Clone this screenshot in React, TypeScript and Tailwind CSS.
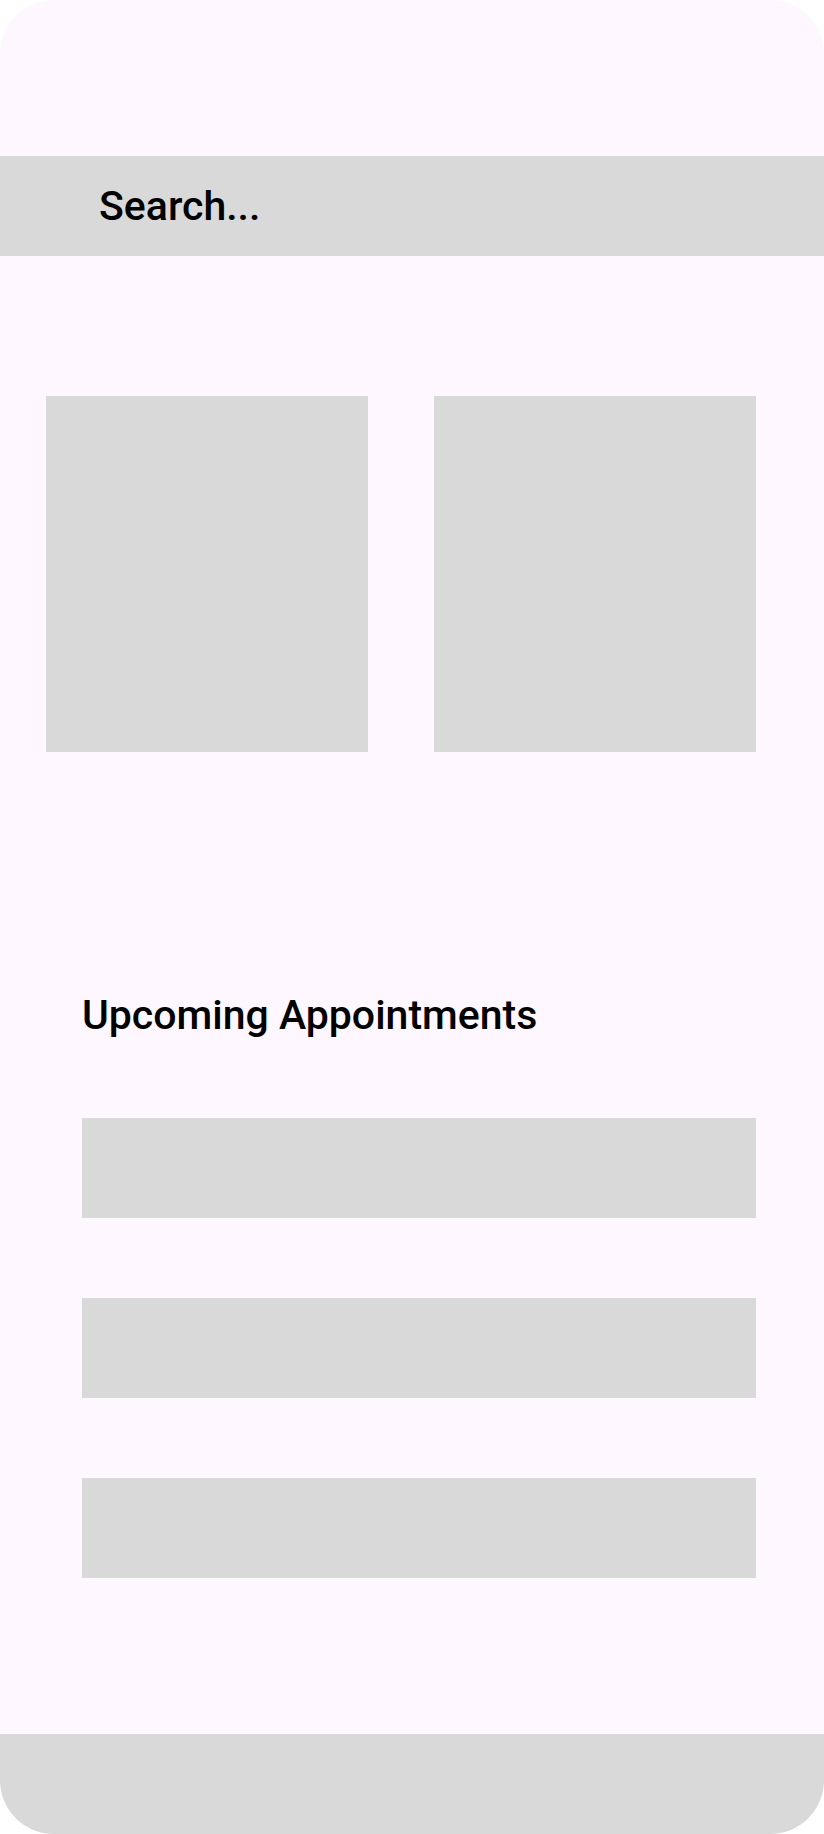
export default function App() {
  const rows = [0, 1, 2];

  return (
    <div className="w-[824px] h-[1834px] bg-white">
      <div
        className="w-full h-full bg-[#fef7ff] rounded-[54px] overflow-hidden flex flex-col text-black"
        style={{ fontFamily: "Roboto, 'Noto Sans', sans-serif" }}
      >
        <div className="h-[156px] shrink-0" />

        <div className="h-[100px] shrink-0 bg-[#d9d9d9] flex items-center pl-[99px]">
          <span className="text-[41px] leading-[48px] font-medium">Search...</span>
        </div>

        <div className="mt-[140px] flex gap-[66px] pl-[46px]">
          <div className="w-[322px] h-[356px] bg-[#d9d9d9]" />
          <div className="w-[322px] h-[356px] bg-[#d9d9d9]" />
        </div>

        <div className="mt-[239px] pl-[82px]">
          <h2 className="text-[41px] leading-[48px] font-medium">Upcoming Appointments</h2>

          <div className="mt-[79px] flex flex-col gap-[80px]">
            {rows.map((r) => (
              <div key={r} className="w-[674px] h-[100px] bg-[#d9d9d9]" />
            ))}
          </div>
        </div>

        <div className="flex-1" />
        <div className="h-[100px] shrink-0 bg-[#d9d9d9]" />
      </div>
    </div>
  );
}
